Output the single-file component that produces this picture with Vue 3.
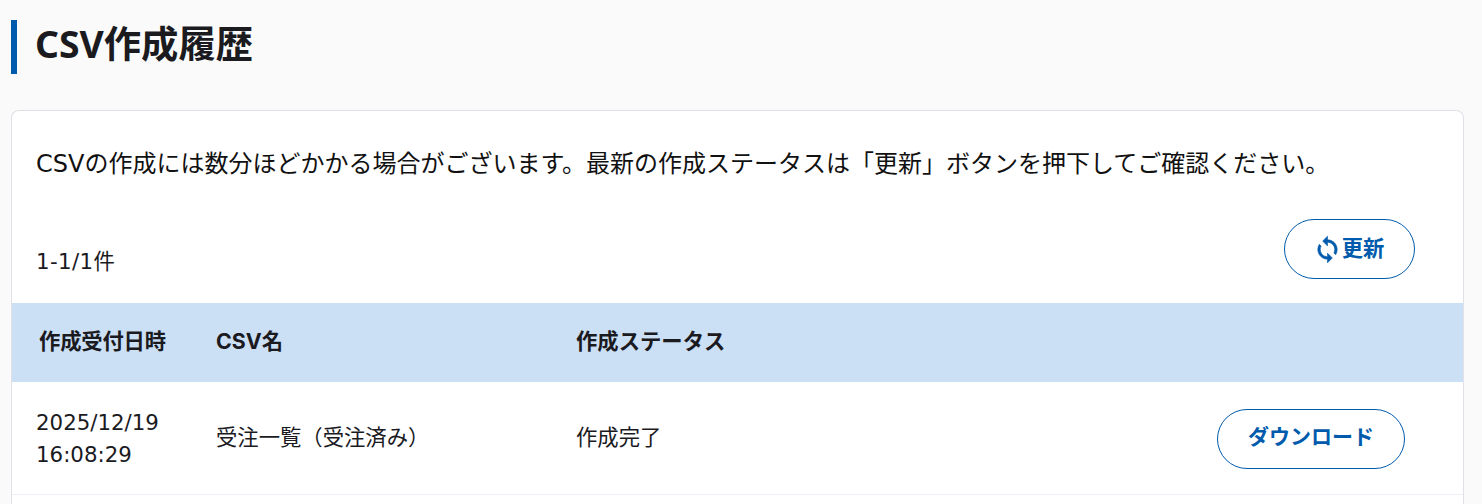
<script setup>
const rows = [
  { date: '2025/12/19', time: '16:08:29', name: '受注一覧（受注済み）', status: '作成完了' },
]
</script>

<template>
  <div class="page">
    <h1 class="title">CSV作成履歴</h1>
    <section class="card">
      <p class="lead"><span class="latin">CSV</span>の作成には数分ほどかかる場合がございます。最新の作成ステータスは「更新」ボタンを押下してご確認ください。</p>
      <div class="toolbar">
        <span class="count">1-1/1件</span>
        <button class="btn refresh" type="button">
          <svg class="icon" viewBox="0 0 24 24" width="29" height="29" fill="currentColor" stroke="currentColor" stroke-width="0.5">
            <path d="M12 4V1L8 5l4 4V6c3.31 0 6 2.69 6 6 0 1.01-.25 1.97-.7 2.8l1.46 1.46C19.54 15.03 20 13.57 20 12c0-4.42-3.58-8-8-8zm0 14c-3.31 0-6-2.69-6-6 0-1.01.25-1.97.7-2.8L5.24 7.74C4.46 8.97 4 10.43 4 12c0 4.42 3.58 8 8 8v3l4-4-4-4v3z" />
          </svg>
          更新
        </button>
      </div>
      <div class="thead">
        <div class="c-date head-date">作成受付日時</div>
        <div class="c-name"><span class="latin-bold">CSV</span>名</div>
        <div class="c-status">作成ステータス</div>
      </div>
      <div v-for="row in rows" :key="row.date" class="row">
        <div class="c-date dates">{{ row.date }}<br />{{ row.time }}</div>
        <div class="c-name">{{ row.name }}</div>
        <div class="c-status">{{ row.status }}</div>
        <button class="btn download" type="button">ダウンロード</button>
      </div>
    </section>
  </div>
</template>

<style>
html, body { background: #fafafa; }
</style>

<style scoped>
.page {
  height: 504px;
  overflow: hidden;
  box-sizing: border-box;
  padding: 20px 18px 0 11px;
  font-family: "Noto Sans", "Noto Sans CJK JP", sans-serif;
  color: #1a1a1f;
  background: #fafafa;
}
.title {
  margin: 0 0 36px;
  height: 54px;
  line-height: 48px;
  box-sizing: border-box;
  border-left: 6px solid #005bac;
  padding-left: 18px;
  font-size: 37.33px;
  font-weight: 700;
}
.card {
  background: #fff;
  border: 1px solid #e0e0e6;
  border-bottom: 0;
  border-radius: 8px 8px 0 0;
  height: 420px;
}
.lead {
  margin: 0;
  padding: 35px 24px 0;
  font-size: 24px;
  line-height: 33px;
  color: #111;
  white-space: nowrap;
}
.latin { font-family: "DejaVu Sans", sans-serif; }
.latin-bold { font-family: Inter, sans-serif; }
.toolbar {
  display: flex;
  justify-content: space-between;
  align-items: flex-end;
  padding: 38px 48px 24px 24px;
}
.count {
  font-family: "DejaVu Sans", "Noto Sans CJK JP", sans-serif;
  font-size: 21.33px;
  letter-spacing: 0.4px;
  line-height: 30px;
  padding-bottom: 2px;
}
.btn {
  font-family: "Noto Sans CJK JP", sans-serif;
  font-weight: 700;
  font-size: 21.33px;
  color: #005bac;
  background: #fff;
  border: 1px solid #005bac;
  border-radius: 30px;
  height: 60px;
  padding: 0 0 5px;
  display: flex;
  align-items: center;
  justify-content: center;
}
.refresh { width: 131px; gap: 0; padding-right: 2px; }
.download { width: 188px; font-size: 21px; margin: 2px 58px 0 auto; padding-bottom: 8px; }
.icon { flex: none; margin-top: 5px; }
.thead, .row {
  display: flex;
  align-items: center;
  font-size: 21.33px;
}
.thead {
  height: 79px;
  background: #cbdff5;
  font-weight: 700;
  padding-bottom: 7px;
  box-sizing: border-box;
}
.row {
  height: 112px;
  border-bottom: 1px solid #eeeef4;
  box-sizing: content-box;
  line-height: 32px;
}
.c-date { width: 204px; padding-left: 24px; box-sizing: border-box; }
.dates { font-family: "DejaVu Sans", sans-serif; font-size: 21.33px; white-space: nowrap; margin-top: 1px; }
.head-date { padding-left: 27px; letter-spacing: -0.2px; }
.c-name { width: 360px; margin-top: -3px; }
.c-status { width: 300px; margin-top: -3px; }
.thead .c-name, .thead .c-status { margin-top: 0; }
</style>
